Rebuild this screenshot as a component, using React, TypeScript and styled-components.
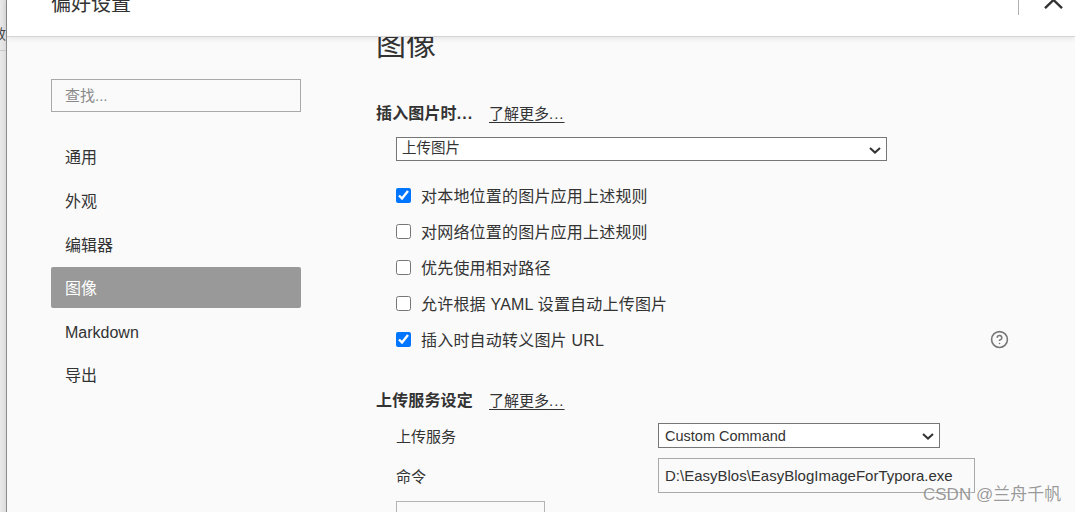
import React from "react";
import styled, { createGlobalStyle } from "styled-components";
import { CircleHelp } from "lucide-react";

const Global = createGlobalStyle`
  html, body { margin: 0; padding: 0; height: 100%; overflow: hidden; background: #fafafa; }
  * { box-sizing: border-box; }
  body { font-family: "Liberation Sans", "Noto Sans CJK SC", sans-serif; color: #333; }
`;

const Page = styled.div`
  position: relative;
  width: 1075px;
  height: 512px;
  display: flex;
  overflow: hidden;
`;

const Strip = styled.div`
  width: 7px;
  flex: none;
  height: 512px;
  overflow: hidden;
  background: linear-gradient(to right, #e9e9e9, #dcdcdc);
  border-right: 1px solid #8a8a8a;
  padding-top: 25px;
`;

const StripGlyph = styled.div`
  width: 6px;
  height: 26px;
  overflow: hidden;
  border-bottom: 1px solid #c8c8c8;
  font-size: 14px;
  line-height: 18px;
  color: #444;
  direction: rtl;
  white-space: nowrap;
`;

const Dialog = styled.div`
  flex: 1;
  min-width: 0;
  display: flex;
  flex-direction: column;
  height: 512px;
`;

const Header = styled.header`
  position: relative;
  z-index: 2;
  flex: none;
  height: 37px;
  background: #fff;
  border-bottom: 1px solid #d4d4d4;
  box-shadow: 0 1px 6px rgba(0, 0, 0, 0.1);
  display: flex;
  align-items: flex-start;
  padding-left: 44px;
`;

const HeaderClip = styled.div`
  flex: 1;
  height: 36px;
  overflow: hidden;
  display: flex;
  align-items: flex-start;
`;

const Title = styled.div`
  font-size: 20px;
  line-height: 30px;
  margin-top: -11px;
  color: #333;
`;

const Divider = styled.div`
  margin-left: auto;
  width: 1px;
  height: 15px;
  background: #b0b0b0;
`;

const CloseIcon = styled.svg`
  display: block;
  margin: 0 12px 0 25px;
  width: 19px;
  height: 9px;
  flex: none;
`;

const Body = styled.div`
  flex: 1;
  min-height: 0;
  display: flex;
  overflow: hidden;
  background: #fafafa;
`;

const Sidebar = styled.aside`
  flex: none;
  width: 369px;
  padding: 42px 0 0 44px;
`;

const Search = styled.input`
  display: block;
  width: 250px;
  height: 33px;
  border: 1px solid #a9a9a9;
  background: transparent;
  padding: 0 13px;
  font: inherit;
  font-size: 15px;
  &::placeholder { color: #8a8a8a; opacity: 1; }
`;

const Nav = styled.nav`
  margin-top: 24.4px;
  width: 250px;
  display: flex;
  flex-direction: column;
  gap: 2.6px;
`;

const NavItem = styled.div<{ $active?: boolean }>`
  height: 41px;
  line-height: 43px;
  padding-left: 14px;
  font-size: 16px;
  border-radius: 2px;
  color: ${(p) => (p.$active ? "#fff" : "#333")};
  background: ${(p) => (p.$active ? "#999" : "transparent")};
`;

const Main = styled.main`
  flex: 1;
  min-width: 0;
`;

const PageTitle = styled.h1`
  margin: -14px 0 0;
  font-size: 30px;
  font-weight: 400;
  line-height: 44px;
  color: #333;
`;

const SectionHead = styled.div<{ $top: number }>`
  margin-top: ${(p) => p.$top}px;
  height: 24px;
  display: flex;
  align-items: center;
  gap: 16px;
`;

const SectionTitle = styled.h2`
  flex: none;
  width: 97px;
  margin: 0;
  font-size: 16px;
  font-weight: 700;
  line-height: 24px;
  color: #333;
  letter-spacing: 0.15px;
  white-space: nowrap;
`;

const Dots = styled.span`
  letter-spacing: 1px;
`;

const Learn = styled.a`
  margin-bottom: 3px;
  font-size: 15px;
  color: #333;
  text-decoration: underline;
  text-underline-offset: 3px;
`;

const Indent = styled.div`
  padding-left: 20px;
`;

const SelectWrap = styled.div<{ $width: number; $height: number; $top?: number }>`
  position: relative;
  width: ${(p) => p.$width}px;
  height: ${(p) => p.$height}px;
  margin-top: ${(p) => p.$top ?? 0}px;
`;

const NativeSelect = styled.select<{ $raise?: number; $inset?: number }>`
  display: block;
  width: 100%;
  height: 100%;
  appearance: none;
  font: inherit;
  font-size: 14.5px;
  color: #333;
  background: #fff;
  border: 1px solid #767676;
  border-radius: 0;
  padding: 0 20px ${(p) => p.$raise ?? 0}px ${(p) => p.$inset ?? 5}px;
`;

const Chevron = styled.svg`
  position: absolute;
  right: 6px;
  top: calc(50% - 2.5px);
  width: 12px;
  height: 7px;
  pointer-events: none;
`;

const Checks = styled.div`
  margin-top: 22px;
  display: flex;
  flex-direction: column;
  gap: 12px;
`;

const CheckRow = styled.label`
  width: 613px;
  height: 24px;
  display: flex;
  align-items: center;
  font-size: 16px;
  letter-spacing: 0.2px;
  color: #333;
`;

const Check = styled.input`
  flex: none;
  width: 15px;
  height: 15px;
  margin: 0 10px 0 0;
  accent-color: #0075ff;
`;

const Help = styled(CircleHelp)`
  margin-left: auto;
  color: #777;
`;

const ServiceGrid = styled.div`
  margin-top: 10px;
  display: grid;
  grid-template-columns: 262px auto;
  justify-content: start;
  align-items: center;
  row-gap: 10px;
`;

const FieldLabel = styled.div`
  font-size: 15px;
  color: #333;
`;

const Command = styled.input`
  display: block;
  width: 317px;
  height: 35px;
  font: inherit;
  font-size: 15px;
  color: #333;
  background: transparent;
  border: 1px solid #a9a9a9;
  padding: 0 6px;
`;

const TestBox = styled.div`
  margin-top: 8px;
  width: 149px;
  height: 40px;
  border: 1px solid #b4b4b4;
  background: #fafafa;
`;

const Watermark = styled.div`
  position: absolute;
  z-index: 3;
  left: 923px;
  top: 485px;
  font-size: 17px;
  line-height: 20px;
  color: rgba(120, 120, 120, 0.75);
  text-shadow: 1px 1px 1px rgba(255, 255, 255, 0.7);
  white-space: nowrap;
`;

const SelectChevron = () => (
  <Chevron viewBox="0 0 12 7">
    <path d="M1 1 L6 5.6 L11 1" fill="none" stroke="#333" strokeWidth="2" />
  </Chevron>
);

export default function App() {
  return (
    <Page>
      <Global />
      <Strip>
        <StripGlyph>效</StripGlyph>
      </Strip>
      <Dialog>
        <Header>
          <HeaderClip>
            <Title>偏好设置</Title>
            <Divider />
            <CloseIcon viewBox="0 0 19 9">
              <path d="M1 8.2 L9.5 0 L18 8.2" fill="none" stroke="#333" strokeWidth="2.4" />
            </CloseIcon>
          </HeaderClip>
        </Header>
        <Body>
          <Sidebar>
            <Search placeholder="查找..." readOnly />
            <Nav>
              <NavItem>通用</NavItem>
              <NavItem>外观</NavItem>
              <NavItem>编辑器</NavItem>
              <NavItem $active>图像</NavItem>
              <NavItem>Markdown</NavItem>
              <NavItem>导出</NavItem>
            </Nav>
          </Sidebar>
          <Main>
            <PageTitle>图像</PageTitle>
            <SectionHead $top={35}>
              <SectionTitle>插入图片时<Dots>...</Dots></SectionTitle>
              <Learn>了解更多<Dots>...</Dots></Learn>
            </SectionHead>
            <Indent>
              <SelectWrap $width={491} $height={24} $top={11}>
                <NativeSelect $raise={3} defaultValue="upload">
                  <option value="upload">上传图片</option>
                </NativeSelect>
                <SelectChevron />
              </SelectWrap>
              <Checks>
                <CheckRow><Check type="checkbox" defaultChecked />对本地位置的图片应用上述规则</CheckRow>
                <CheckRow><Check type="checkbox" />对网络位置的图片应用上述规则</CheckRow>
                <CheckRow><Check type="checkbox" />优先使用相对路径</CheckRow>
                <CheckRow><Check type="checkbox" />允许根据 YAML 设置自动上传图片</CheckRow>
                <CheckRow><Check type="checkbox" defaultChecked />插入时自动转义图片 URL<Help size={19} strokeWidth={2} /></CheckRow>
              </Checks>
            </Indent>
            <SectionHead $top={38}>
              <SectionTitle>上传服务设定</SectionTitle>
              <Learn>了解更多<Dots>...</Dots></Learn>
            </SectionHead>
            <Indent>
              <ServiceGrid>
                <FieldLabel>上传服务</FieldLabel>
                <SelectWrap $width={282} $height={25}>
                  <NativeSelect $inset={6} defaultValue="custom">
                    <option value="custom">Custom Command</option>
                  </NativeSelect>
                  <SelectChevron />
                </SelectWrap>
                <FieldLabel>命令</FieldLabel>
                <Command defaultValue="D:\EasyBlos\EasyBlogImageForTypora.exe" readOnly />
              </ServiceGrid>
              <TestBox />
            </Indent>
          </Main>
        </Body>
      </Dialog>
      <Watermark>CSDN @兰舟千帆</Watermark>
    </Page>
  );
}
